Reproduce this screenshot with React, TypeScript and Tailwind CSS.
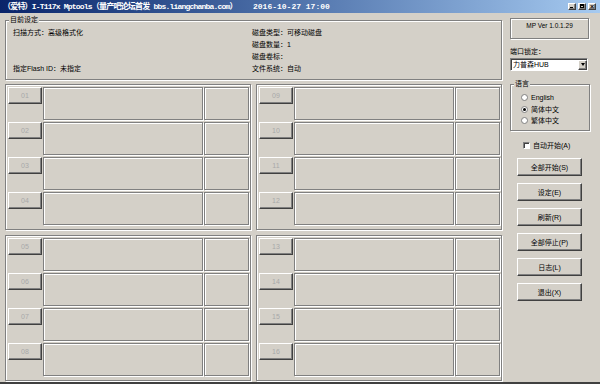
import React from 'react';

const etched = 'border border-[#808080] shadow-[inset_1px_1px_0_#fff,1px_1px_0_#fff]';
const raised =
  'border border-t-white border-l-white border-r-[#404040] border-b-[#404040] shadow-[inset_-1px_-1px_0_#808080]';
const ui = "font-['Liberation_Sans','Noto_Sans_CJK_SC',sans-serif]";

function Panel({ start }: { start: number }) {
  const nums = [0, 1, 2, 3].map((i) => String(start + i).padStart(2, '0'));
  return (
    <div className={`h-[146px] ${etched} pt-[2px] pl-[2px] flex flex-col gap-[2px]`}>
      {nums.map((n) => (
        <div key={n} className="flex h-[33px] shrink-0">
          <div
            className={`w-[34px] h-[17px] ${raised} flex items-center justify-center text-[7px] leading-none text-[#a8a8a8]`}
          >
            {n}
          </div>
          <div className={`ml-[1px] w-[160px] h-full ${etched}`} />
          <div className={`ml-[1px] w-[45px] h-full ${etched}`} />
        </div>
      ))}
    </div>
  );
}

function TitleButton({ kind }: { kind: 'min' | 'max' | 'close' }) {
  return (
    <div className={`w-[8px] h-[7px] bg-[#d4d0c8] ${raised} relative`}>
      {kind === 'min' && <div className="absolute left-[1px] bottom-[1px] w-[3px] h-px bg-black" />}
      {kind === 'max' && (
        <div className="absolute left-[1px] top-0 w-[4px] h-[4px] border border-black border-t-2" />
      )}
      {kind === 'close' && (
        <div className="absolute inset-0 flex items-center justify-center text-[7px] leading-none font-bold text-black">
          ×
        </div>
      )}
    </div>
  );
}

function Radio({ label, checked }: { label: string; checked?: boolean }) {
  return (
    <div className="flex items-center h-[11.5px]">
      <div className="w-[7px] h-[7px] rounded-full bg-white border border-[#808080] flex items-center justify-center">
        {checked && <div className="w-[3px] h-[3px] rounded-full bg-black" />}
      </div>
      <span className="ml-[3px] text-[7px] leading-none">{label}</span>
    </div>
  );
}

const actions = ['全部开始(S)', '设定(E)', '刷新(R)', '全部停止(P)', '日志(L)', '退出(X)'];

export default function App() {
  return (
    <div
      className={`w-[600px] h-[384px] bg-[#d4d0c8] overflow-hidden flex flex-col border-b-2 border-b-[#404040] text-black ${ui}`}
    >
      {/* title bar */}
      <div className="h-[13px] shrink-0 flex items-center bg-gradient-to-r from-[#0a246a] to-[#a6caf0] pl-[3px] pr-[4px]">
        <span className="w-[250px] shrink-0 whitespace-nowrap text-white font-bold text-[8px] leading-none tracking-[-0.8px] font-['Liberation_Mono','Noto_Sans_CJK_SC',monospace]">
          （爱特）I-T117x Mptools（量产吧论坛首发 bbs.liangchanba.com）
        </span>
        <span className="whitespace-nowrap text-white font-bold text-[8px] leading-none font-['Liberation_Mono',monospace]">
          2016-10-27 17:00
        </span>
        <div className="ml-auto flex items-center">
          <TitleButton kind="min" />
          <div className="ml-[2px]">
            <TitleButton kind="max" />
          </div>
          <div className="ml-[2px]">
            <TitleButton kind="close" />
          </div>
        </div>
      </div>

      <div className="flex">
        {/* left column */}
        <div className="ml-[5px] w-[497px]">
          <div className={`relative mt-[7px] h-[60px] ${etched}`}>
            <span className="absolute -top-[6px] left-[3px] px-[1px] bg-[#d4d0c8] text-[7px] leading-[10px]">
              目前设定
            </span>
            <div className="grid grid-cols-[239px_1fr] pt-[6px] pl-[7px] text-[7px] leading-[12px]">
              <div>
                <div className="h-[12px]">扫描方式：高级格式化</div>
                <div className="h-[12px]" />
                <div className="h-[12px]" />
                <div className="h-[12px]">指定Flash ID：未指定</div>
              </div>
              <div>
                <div className="h-[12px]">磁盘类型：可移动磁盘</div>
                <div className="h-[12px]">磁盘数量：1</div>
                <div className="h-[12px]">磁盘卷标：</div>
                <div className="h-[12px]">文件系统：自动</div>
              </div>
            </div>
          </div>

          <div className="mt-[4px] grid grid-cols-[246px_246px] gap-[5px]">
            <Panel start={1} />
            <Panel start={9} />
            <Panel start={5} />
            <Panel start={13} />
          </div>
        </div>

        {/* right column */}
        <div className="ml-[8px] w-[82px] flex flex-col">
          <div
            className={`mt-[5px] w-[79px] h-[21px] border border-[#808080] shadow-[inset_1px_1px_0_#fff,1px_1px_0_#fff] flex justify-center pt-[4px] text-[6.5px] leading-none`}
          >
            MP Ver 1.0.1.29
          </div>
          <div className="mt-[8px] text-[7px] leading-[10px]">端口锁定：</div>
          <div className="mt-[1px] w-[78px] h-[13px] bg-white border border-t-[#808080] border-l-[#808080] border-r-white border-b-white shadow-[inset_1px_1px_0_#404040] flex items-center pl-[2px]">
            <span className="text-[7px] leading-none flex-1">力普森HUB</span>
            <div className={`w-[9px] h-[10px] bg-[#d4d0c8] ${raised} flex items-center justify-center`}>
              <div className="w-0 h-0 border-l-[2.5px] border-r-[2.5px] border-t-[3px] border-l-transparent border-r-transparent border-t-black" />
            </div>
          </div>

          <div className={`relative mt-[13px] w-[80px] h-[47px] ${etched} pt-[7px] pl-[10px]`}>
            <span className="absolute -top-[6px] left-[3px] px-[1px] bg-[#d4d0c8] text-[7px] leading-[10px]">
              语言
            </span>
            <Radio label="English" />
            <Radio label="简体中文" checked />
            <Radio label="繁体中文" />
          </div>

          <div className="mt-[10px] ml-[13px] flex items-center h-[8px]">
            <div className="w-[7px] h-[7px] bg-white border border-t-[#808080] border-l-[#808080] border-r-white border-b-white shadow-[inset_1px_1px_0_#404040]" />
            <span className="ml-[3px] text-[7px] leading-none">自动开始(A)</span>
          </div>

          <div className="mt-[9px] ml-[7px] flex flex-col gap-[7px]">
            {actions.map((a) => (
              <div
                key={a}
                className={`w-[65px] h-[18px] ${raised} flex items-center justify-center text-[7px] leading-none`}
              >
                {a}
              </div>
            ))}
          </div>
        </div>
      </div>
    </div>
  );
}
